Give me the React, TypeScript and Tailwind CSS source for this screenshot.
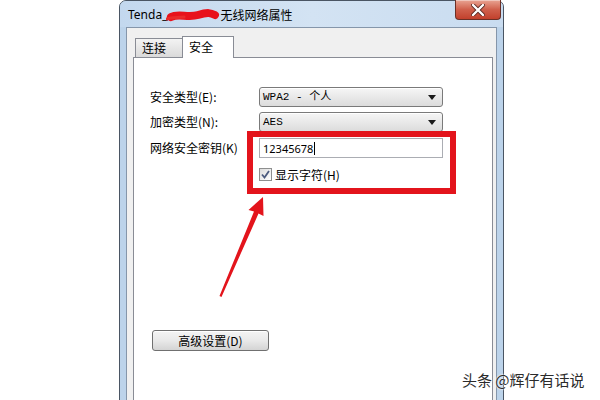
import React from 'react';

const FONT = { fontFamily: '"Noto Sans", "Noto Sans CJK SC", sans-serif' };
const CJK = { fontFamily: '"Noto Sans CJK SC", "Noto Sans", sans-serif' };

function SelectBox({ value }: { value: string }) {
  return (
    <div className="flex h-[20px] w-[184px] items-center justify-between rounded-[3px] border border-[#7a7a7a] bg-gradient-to-b from-[#f6f6f6] to-[#dcdcdc] pl-[3px] pr-[6px] shadow-[inset_0_1px_0_#ffffff]">
      <span className="text-[11px] leading-none text-black" style={{ fontFamily: '"Liberation Mono", "Noto Sans CJK SC", monospace' }}>
        {value}
      </span>
      <svg width="8" height="5" viewBox="0 0 8 5">
        <path d="M0 0 H8 L4 5 Z" fill="#1a1a1a" />
      </svg>
    </div>
  );
}

function Row({ label, children }: { label: string; children: React.ReactNode }) {
  return (
    <div className="flex items-center">
      <span className="w-[109px] text-[12px] leading-none text-black" style={CJK}>
        {label}
      </span>
      {children}
    </div>
  );
}

export default function App() {
  return (
    <div className="relative h-[400px] w-[600px] overflow-hidden bg-white" style={FONT}>
      <div className="ml-[119px] flex h-[430px] w-[385px] flex-col rounded-t-[7px] border border-[#4a5563] bg-[#bcd3ea]">
        {/* title bar */}
        <div className="flex h-[26px] items-start justify-between rounded-t-[6px] bg-gradient-to-r from-[#c3d8ee] via-[#d3e3f3] to-[#c9dcf0]">
          <div className="flex items-center pl-[8px] pt-[6px] text-[12px] leading-[16px] text-black" style={FONT}>
            <span>Tenda_</span>
            <svg width="54" height="16" viewBox="0 0 54 16" className="-ml-[1px]">
              <path d="M5 10 C 12 6, 22 11, 32 8 S 45 6, 49 8" stroke="#e8121c" strokeWidth="8" strokeLinecap="round" fill="none" />
              <path d="M1 12 C 6 10, 12 11, 18 10" stroke="#ea2a2a" strokeWidth="3" strokeLinecap="round" fill="none" />
            </svg>
            <span style={CJK}>无线网络属性</span>
          </div>
          <div className="-mt-[1px] mr-[2px] flex h-[20px] w-[46px] items-center justify-center rounded-b-[4px] border border-t-0 border-[#6b3026] bg-gradient-to-b from-[#e8a493] via-[#d0604c] to-[#c2402c] shadow-[inset_0_1px_0_rgba(255,255,255,0.4)]">
            <svg width="14" height="12" viewBox="0 0 14 12">
              <path d="M2 1 L12 11 M12 1 L2 11" stroke="#5a2a22" strokeWidth="4" strokeLinecap="round" />
              <path d="M2 1 L12 11 M12 1 L2 11" stroke="#ffffff" strokeWidth="2.4" strokeLinecap="round" />
            </svg>
          </div>
        </div>

        {/* client area */}
        <div className="mx-[6px] flex flex-1 flex-col border border-[#8596aa] bg-[#f0f0f0] pl-[6px] pr-[3px] pt-[8px]">
          <div className="flex items-end pl-[2px]">
            <div className="flex h-[19px] w-[47px] items-center border-l border-t border-[#898c95] bg-gradient-to-b from-[#f3f3f3] to-[#dadada] pl-[6px] text-[12px] text-black" style={CJK}>
              连接
            </div>
            <div className="relative z-10 -mb-[1px] flex h-[22px] w-[52px] items-start border border-b-0 border-[#898c95] bg-white pl-[6px] pt-[3px] text-[12px] leading-[14px] text-black" style={CJK}>
              安全
            </div>
          </div>
          <div className="flex flex-1 flex-col border border-[#898c95] bg-white pl-[16px] pt-[29px]">
            <Row label="安全类型(E):">
              <SelectBox value="WPA2 - 个人" />
            </Row>
            <div className="mt-[5px]">
              <Row label="加密类型(N):">
                <SelectBox value="AES" />
              </Row>
            </div>
            <div className="mt-[6px]">
              <Row label="网络安全密钥(K)">
                <div className="flex h-[20px] w-[184px] items-center border border-[#abadb3] bg-white pl-[3px] text-[11px] leading-none text-black" style={FONT}>
                  12345678
                  <span className="ml-[1px] h-[13px] w-[1px] bg-black" />
                </div>
              </Row>
            </div>
            <div className="ml-[109px] mt-[10px] flex items-center gap-[3px]">
              <div className="flex h-[13px] w-[13px] items-center justify-center border border-[#8e8f8f] bg-gradient-to-br from-[#dcdcdc] to-[#ffffff]">
                <svg width="9" height="9" viewBox="0 0 9 9">
                  <path d="M1 4.5 L3.5 7.5 L8 1" stroke="#4b5a7e" strokeWidth="1.8" fill="none" />
                </svg>
              </div>
              <span className="text-[12px] leading-none text-black" style={CJK}>
                显示字符(H)
              </span>
            </div>
            <div className="ml-[2px] mt-[149px] flex h-[21px] w-[117px] items-center justify-center rounded-[3px] border border-[#707070] bg-gradient-to-b from-[#f4f4f4] via-[#e9e9e9] to-[#d4d4d4] text-[12px] text-black shadow-[inset_0_1px_0_#ffffff]" style={CJK}>
              高级设置(D)
            </div>
          </div>
        </div>
      </div>

      {/* annotation overlays */}
      <div className="absolute left-[247px] top-[131px] h-[63px] w-[209px] border-[6px] border-[#e3141c]" />
      <svg className="pointer-events-none absolute left-0 top-0" width="600" height="400" viewBox="0 0 600 400">
        <polygon
          points="263,197 263.5,216 258.5,213.5 221.5,297 219.5,296 254,211.5 248.5,210"
          fill="#e3141c"
        />
      </svg>
      <div
        className="absolute left-[462px] top-[371px] whitespace-nowrap text-[15px] leading-[18px] text-[#2b2b2b] [text-shadow:0_0_2px_#ffffff,0_0_2px_#ffffff]"
        style={CJK}
      >
        头条 @辉仔有话说
      </div>
    </div>
  );
}
